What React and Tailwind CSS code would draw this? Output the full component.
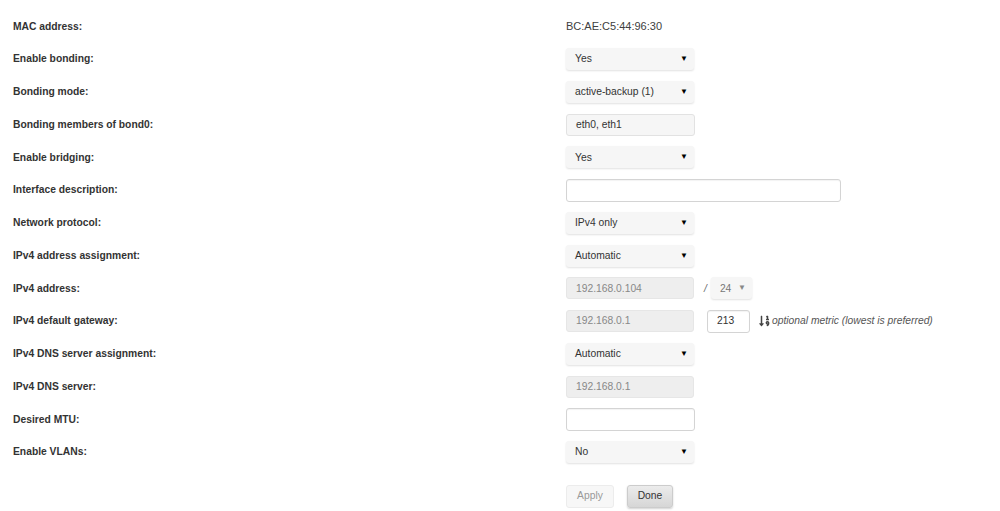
import { FaSortNumericDown } from 'react-icons/fa';

const rows = [
  { label: 'MAC address:', kind: 'text', value: 'BC:AE:C5:44:96:30' },
  { label: 'Enable bonding:', kind: 'select', value: 'Yes' },
  { label: 'Bonding mode:', kind: 'select', value: 'active-backup (1)' },
  { label: 'Bonding members of bond0:', kind: 'readonly', value: 'eth0, eth1' },
  { label: 'Enable bridging:', kind: 'select', value: 'Yes' },
  { label: 'Interface description:', kind: 'wide' },
  { label: 'Network protocol:', kind: 'select', value: 'IPv4 only' },
  { label: 'IPv4 address assignment:', kind: 'select', value: 'Automatic' },
  { label: 'IPv4 address:', kind: 'address' },
  { label: 'IPv4 default gateway:', kind: 'gateway' },
  { label: 'IPv4 DNS server assignment:', kind: 'select', value: 'Automatic' },
  { label: 'IPv4 DNS server:', kind: 'disabled', value: '192.168.0.1' },
  { label: 'Desired MTU:', kind: 'input' },
  { label: 'Enable VLANs:', kind: 'select', value: 'No' },
];

const Select = ({ value, className = 'w-[128px]', muted }) => (
  <div
    className={`${className} h-[22px] flex items-center justify-between pl-[9px] pr-[6px] rounded-[3px] bg-[#f6f6f6] shadow-[0_1px_2px_rgba(0,0,0,0.12)] ${muted ? 'text-[#777]' : 'text-[#333]'}`}
  >
    <span>{value}</span>
    <span className={`text-[8px] ${muted ? 'text-[#888]' : 'text-black'}`}>▼</span>
  </div>
);

const Disabled = ({ value }) => (
  <div className="w-[128px] h-[22px] flex items-center pl-[9px] rounded-[3px] bg-[#eeeeee] border border-[#e6e6e6] text-[#888]">
    {value}
  </div>
);

const Input = ({ value, className = 'w-[129px]' }) => (
  <div className={`${className} h-[23px] flex items-center pl-[9px] rounded-[3px] bg-white border border-[#d4d4d4] shadow-[inset_0_1px_1px_rgba(0,0,0,0.05)] text-[#333]`}>
    {value}
  </div>
);

const Field = ({ row }) => {
  switch (row.kind) {
    case 'text':
      return <span className="text-[#404040] text-[11px]">{row.value}</span>;
    case 'select':
      return <Select value={row.value} />;
    case 'readonly':
      return (
        <div className="w-[129px] h-[22px] flex items-center pl-[9px] rounded-[3px] bg-[#f6f6f6] border border-[#e2e2e2] text-[#333]">
          {row.value}
        </div>
      );
    case 'wide':
      return <Input className="w-[275px]" />;
    case 'input':
      return <Input />;
    case 'disabled':
      return <Disabled value={row.value} />;
    case 'address':
      return (
        <div className="flex items-center">
          <Disabled value="192.168.0.104" />
          <span className="ml-[10px] mr-[4px] italic text-[#666]">/</span>
          <Select value="24" className="w-[41px]" muted />
        </div>
      );
    case 'gateway':
      return (
        <div className="flex items-center">
          <Disabled value="192.168.0.1" />
          <Input value="213" className="w-[43px] ml-[13px]" />
          <FaSortNumericDown className="ml-[9px] text-[#444] w-[11px] h-[12px]" />
          <span className="ml-[2px] italic text-[#555]">optional metric (lowest is preferred)</span>
        </div>
      );
    default:
      return null;
  }
};

export default function App() {
  return (
    <div className="w-[1000px] h-[511px] bg-white overflow-hidden text-[10.3px] font-['Liberation_Sans',Arial,sans-serif]">
      <div className="pt-[10px]">
        {rows.map((row) => (
          <div key={row.label} className="grid grid-cols-[566px_1fr] h-[32.75px] items-center">
            <span className="pl-[13px] font-bold text-[#333]">{row.label}</span>
            <div className="flex items-center">
              <Field row={row} />
            </div>
          </div>
        ))}
      </div>
      <div className="ml-[566px] mt-[16px] flex items-center gap-[13px]">
        <button className="w-[48px] h-[23px] rounded-[3px] bg-[#f7f7f7] border border-[#ececec] text-[#999] text-[10.3px]">
          Apply
        </button>
        <button className="w-[46px] h-[23px] rounded-[3px] bg-gradient-to-b from-[#ececec] to-[#d6d6d6] border border-[#cccccc] shadow-[0_1px_2px_rgba(0,0,0,0.18)] text-[#333] text-[10.3px]">
          Done
        </button>
      </div>
    </div>
  );
}
